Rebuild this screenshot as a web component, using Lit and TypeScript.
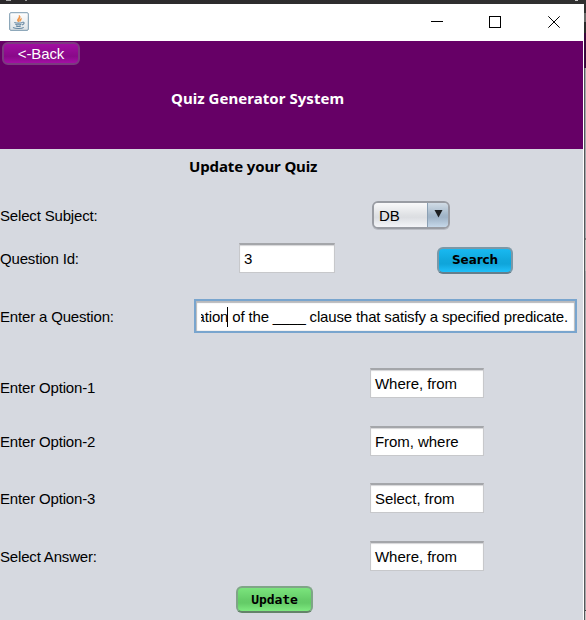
import { LitElement, html, css } from "lit";
import { customElement } from "lit/decorators.js";

@customElement("app-root")
export class AppRoot extends LitElement {
  static styles = css`
    :host {
      display: grid;
      grid-template-columns: 583px 1px 2px;
      grid-template-rows: 4px 616px;
      width: 586px;
      height: 620px;
      overflow: hidden;
      background: #d6d9e0;
      color: #000;
      font: 15px/18px "Liberation Sans", Arial, sans-serif;
    }
    * { box-sizing: border-box; }
    .top { grid-column: 1 / 4; background: linear-gradient(90deg, #2b292b, #303030); display: flex; }
    .fleck { width: 5px; height: 1px; margin-left: 6px; background: #aaa; }
    .fleck.b { margin-left: 14px; width: 2px; background: #999; }
    .fleck.c { margin-left: 548px; width: 3px; background: #ccc; }
    .edge { background: #fff; }
    .behind {
      background:
        linear-gradient(90deg, #55575a 1px, transparent 1px) 0 64px no-repeat,
        linear-gradient(#303030 9px, #696969 9px 18px, #2b2b2b 18px 29px, #3a083c 29px 64px,
          #a4a6aa 64px 234px, #777 234px 236px, #bdbdb9 236px 267px, #a6a6a8 267px 606px, #444 606px 607px, #c4c4c4 607px);
    }
    .window { display: flex; flex-direction: column; min-width: 0; }
    .titlebar { height: 37px; flex: none; background: #fff; display: flex; align-items: flex-start; padding: 8px 0 0 9px; margin-right: -1px; }
    .java { width: 20px; height: 19px; flex: none; }
    .controls { width: 132px; height: 12px; margin: 4px 22px 0 auto; flex: none; }
    .banner { height: 108px; flex: none; background: #660066; padding: 1px 0 0 2px; color: #fff; }
    .btn { display: flex; align-items: center; justify-content: center; border: 2px solid; border-radius: 6px; padding: 0; margin: 0; }
    .back {
      width: 78px; height: 23px; color: #fff; font: 15px/18px "Liberation Sans", Arial, sans-serif; letter-spacing: -0.1px;
      border-color: #7c3a80; background: linear-gradient(#a10fa1, #8c0a8c 55%, #890989 65%, #a40fa4);
    }
    .heading { font: bold 15px/18px "Noto Sans", "Open Sans", sans-serif; white-space: nowrap; }
    .banner .heading { margin: 24px 0 0 169px; letter-spacing: 0.04px; }
    .form { display: flex; flex-direction: column; }
    .form > .heading { height: 43px; padding: 8px 0 0 189px; letter-spacing: -0.13px; }
    .row { display: flex; align-items: center; flex: none; }
    .label { flex: none; white-space: nowrap; padding-top: 2px; letter-spacing: -0.17px; }
    .r46 { height: 46px; } .r40 { height: 40px; } .r76 { height: 76px; } .r58 { height: 58px; } .r57 { height: 57px; }
    .c372 { width: 372px; } .c370 { width: 370px; } .c239 { width: 239px; } .c194 { width: 194px; }
    .low { padding-top: 10px; }
    .r57 .label { padding-top: 0; }
    .field {
      height: 30px; width: 114px; display: flex; align-items: center; padding: 1px 0 0 4px; white-space: pre;
      background: #fff; border: 1px solid #c7c8cb; border-top: 2px solid #a4a6aa;
      box-shadow: inset 0 1px 1px #d5d5d8; overflow: hidden; margin-bottom: 1px; letter-spacing: -0.05px;
    }
    .id { width: 96px; }
    .question {
      width: 383px; height: 34px; border: 2px solid #79a5ce; padding: 2px 0 0 5px; margin: 0;
      box-shadow: inset 0 2px 1px #b9babd, inset 1px 0 1px #bbb, inset -1px 0 1px #bbb;
    }
    .clip { width: 367px; display: flex; justify-content: flex-end; overflow: hidden; height: 20px; line-height: 20px; letter-spacing: -0.16px; }
    .caret { width: 1px; height: 20px; background: #000; margin: 0 0 0 -1px; flex: none; }
    .combo { width: 78px; height: 28px; display: flex; border: 2px solid #999ca3; border-radius: 6px; overflow: hidden; box-shadow: 0 1px 0 #b9bcc3; margin-bottom: 1px; }
    .value { flex: 1; padding: 4px 0 0 5px; letter-spacing: -0.1px; background: linear-gradient(#f9f9fa, #dfe1e4 50%, #dcdee2 60%, #f4f5f8); }
    .arrow { width: 21px; border-left: 1px solid #8ba0b4; background: linear-gradient(#d1dce6, #a2b6c8 50%, #a0b4c8 60%, #c6d8e9); display: flex; justify-content: center; padding-top: 7px; }
    .arrow svg { width: 9px; height: 8px; }
    .search {
      width: 76px; height: 27px; margin: 4px 0 0 102px; color: #000;
      font: bold 12px/16px "DejaVu Sans", Verdana, sans-serif; letter-spacing: -0.1px;
      border-color: #7b98a7; border-bottom-color: #657e8b;
      background: linear-gradient(#19b9f1, #10a7dc 50%, #0fa5da 65%, #20c0fa);
    }
    .update {
      width: 77px; height: 27px; margin: 1px 0 0 236px; color: #000;
      font: bold 13px/16px "DejaVu Sans Mono", monospace; letter-spacing: -0.1px;
      border-color: #7fa587; border-bottom-color: #64836a;
      background: linear-gradient(#7be47d, #66cd69 50%, #64cb67 65%, #7eea80);
    }
  `;

  private option(label: string, value: string, height: string, low = false) {
    return html`<div class="row ${height}">
      <span class="label c370 ${low ? "low" : ""}">${label}</span>
      <div class="field">${value}</div>
    </div>`;
  }

  render() {
    return html`
      <div class="top"><i class="fleck"></i><i class="fleck b"></i><i class="fleck c"></i></div>
      <main class="window">
        <header class="titlebar">
          <svg class="java" viewBox="0 0 20 19">
            <defs><linearGradient id="g" x2="0" y2="1"><stop stop-color="#fff"/><stop offset="1" stop-color="#dde2e6"/></linearGradient></defs>
            <rect x=".7" y="4" width="18.6" height="14.3" rx="1" fill="#5d7e98"/>
            <rect x=".7" y=".7" width="18.6" height="17.6" rx="1.2" fill="url(#g)" stroke="#7c9aaf"/>
            <path d="M9.4 9.8C6.8 7.4 10.9 6.3 10.3 3.5 12.5 5.7 8.9 7 9.7 9.8M11 9.4c-.9-1.5.3-2.2 1.3-3-.3 1.3-.3 1.9-1.3 3" fill="#f39a4d" stroke="#ee8e3c" stroke-width=".9"/>
            <path d="M5.3 10.4c2 .7 6.2.7 8.2 0M6.3 12.2c1.8.6 4.5.6 6.1 0M7 14c1.5.6 3.6.5 4.8 0M4 15.6c2.8 1.4 9 1.2 10.7-.2M13.6 10.2c2.1-.3 2.1 2-.6 2.8" fill="none" stroke="#6889a3" stroke-width="1.1"/>
          </svg>
          <svg class="controls" viewBox="0 0 132 12" fill="none" stroke="#000" shape-rendering="crispEdges">
            <path d="M1 5.5h12M59.500 .5h11v11h-11z"/>
            <path d="M118.300 .3l11.400 11.400M129.700 .3l-11.400 11.400" shape-rendering="auto"/>
          </svg>
        </header>
        <section class="banner">
          <button class="btn back">&lt;-Back</button>
          <div class="heading">Quiz Generator System</div>
        </section>
        <section class="form">
          <div class="heading">Update your Quiz</div>
          <div class="row r46">
            <span class="label c372">Select Subject:</span>
            <div class="combo"><span class="value">DB</span><span class="arrow"><svg viewBox="0 0 9 8"><path d="M.5 0h8l-4 7.500z" fill="#1d1f21"/></svg></span></div>
          </div>
          <div class="row r40">
            <span class="label c239">Question Id:</span>
            <div class="field id">3</div>
            <button class="btn search">Search</button>
          </div>
          <div class="row r76">
            <span class="label c194">Enter a Question:</span>
            <div class="field question"><div class="clip"><span>ation</span><i class="caret"></i><span> of the ____ clause that satisfy a specified predicate.</span></div></div>
          </div>
          ${this.option("Enter Option-1", "Where, from", "r58", true)}
          ${this.option("Enter Option-2", "From, where", "r58")}
          ${this.option("Enter Option-3", "Select, from", "r57")}
          ${this.option("Select Answer:", "Where, from", "r58")}
          <button class="btn update">Update</button>
        </section>
      </main>
      <div class="edge"></div>
      <div class="behind"></div>
    `;
  }
}
